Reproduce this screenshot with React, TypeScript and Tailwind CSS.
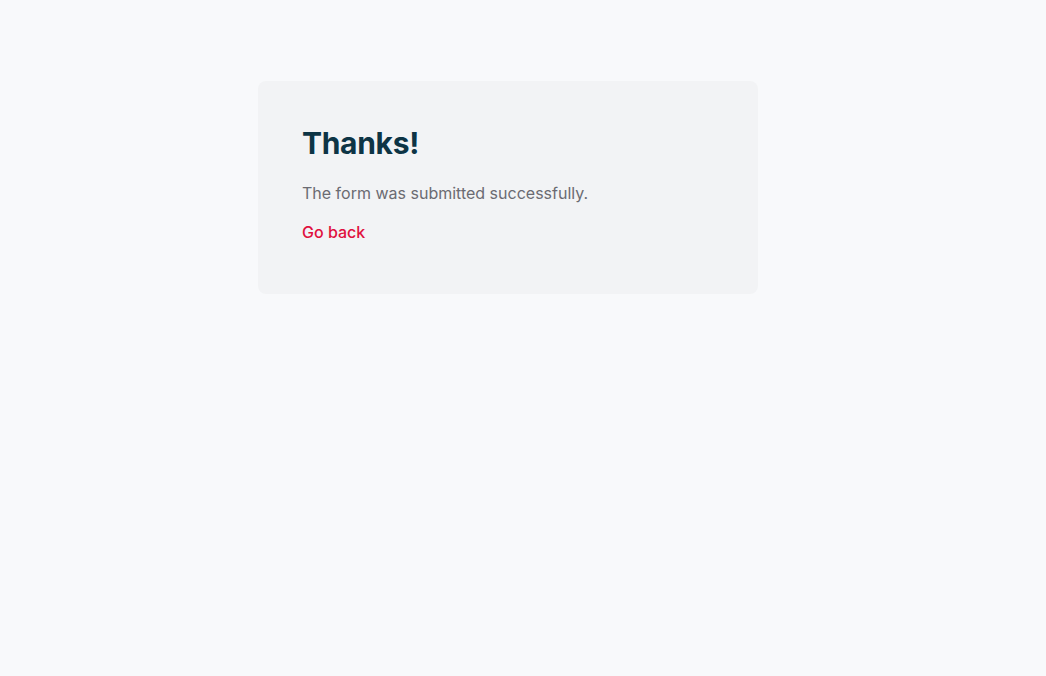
export default function App() {
  return (
    <div
      className="min-h-screen bg-[#f8f9fb] pt-[81px] pl-[258px]"
      style={{ fontFamily: 'Inter, "Noto Sans", sans-serif' }}
    >
      <div className="w-[500px] h-[213px] rounded-lg bg-[#f2f3f5] px-11 pt-11">
        <h1 className="text-[30px] leading-9 font-bold text-[#0d3445] tracking-[-0.01em]">Thanks!</h1>
        <p className="mt-5 text-base leading-6 text-[#6b6b72]">
          The form was submitted successfully.
        </p>
        <a href="#" className="mt-[15px] inline-block text-base leading-6 font-medium text-[#e0103e]">
          Go back
        </a>
      </div>
    </div>
  )
}
